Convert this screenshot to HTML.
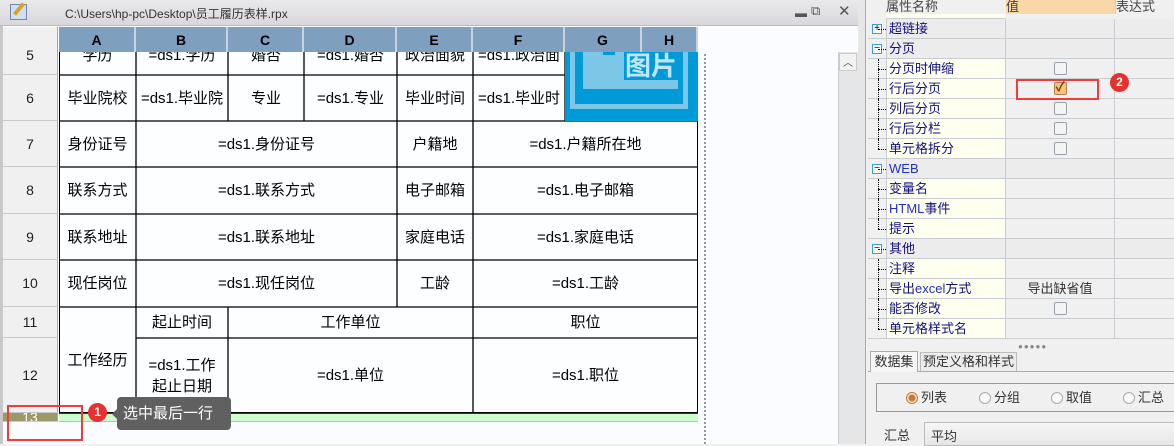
<!DOCTYPE html>
<html><head><meta charset="utf-8"><style>
*{box-sizing:border-box;margin:0;padding:0}
body{width:1174px;height:444px;overflow:hidden;background:#f0f0f0;font-family:"Liberation Sans","Noto Sans CJK SC",sans-serif;position:relative}
.a{position:absolute}
.c{position:absolute;display:flex;align-items:center;justify-content:center;font-size:15px;color:#000;text-align:center;line-height:21px}
.ch{position:absolute;top:27px;height:25px;background:#7f9fbf;border-right:2px solid #c8d2dc;display:flex;align-items:center;justify-content:center;font-weight:bold;font-size:14px}
.rh{position:absolute;left:3px;width:55px;background:#f0f0f0;border-bottom:1px solid #c8c8c8;border-right:1px solid #aaa;display:flex;align-items:center;justify-content:center;font-size:14px;color:#222}
.pr{position:absolute;left:868px;width:306px;height:20px;border-bottom:1px solid #c9ccd0;font-size:13px;color:#101080}
.pr .n{position:absolute;left:18px;width:119px;height:19px;padding-left:2px;line-height:19px;background:#fffff0;border-left:1px solid #c9ccd0}
.pr .v{position:absolute;left:137px;width:109px;height:19px;border-left:1px solid #c9ccd0;background:#f0f0f0;text-align:center;line-height:19px;color:#333}
.pr .e{position:absolute;left:246px;width:60px;height:19px;border-left:1px solid #c9ccd0;background:#f0f0f0}
.pr.g .n,.pr.g .v,.pr.g .e{background:#ececec}
.cb{display:inline-block;width:13px;height:13px;border:1px solid #9aa0a8;border-radius:2px;background:#f4f4f4;vertical-align:middle;margin-top:-2px}
.pm{position:absolute;left:4px;top:5px;width:10px;height:10px;border:1px solid #3aa0c8;background:#fff;font-size:10px;line-height:8px;text-align:center;color:#000}
.dl{position:absolute;left:10px;top:0;height:20px;border-left:1px dotted #000}
.dh{position:absolute;left:10px;top:10px;width:8px;border-top:1px dotted #000}
.rd{display:inline-block;width:12px;height:12px;border:1px solid #aaa;border-radius:50%;background:#fafafa;vertical-align:middle;margin-right:3px;margin-top:-2px}
</style></head><body>
<div class="a" style="left:0;top:0;width:858px;height:26px;background:linear-gradient(#e9e9ec,#d8d8dc);border-bottom:1px solid #bbb"></div>
<div class="a" style="left:10px;top:4px;width:17px;height:16px;background:#cfe0f0;border:1px solid #6a8ab0"></div>
<div class="a" style="left:17px;top:2px;width:4px;height:14px;background:#e0a020;transform:rotate(40deg)"></div>
<div class="a" style="left:65px;top:5px;font-size:12px;color:#333">C:\Users\hp-pc\Desktop\员工履历表样.rpx</div>
<div class="a" style="left:795px;top:6px;font-size:12px;color:#555">▬</div>
<div class="a" style="left:811px;top:3px;font-size:13px;color:#555">⧉</div>
<div class="a" style="left:838px;top:2px;font-size:15px;color:#555">✕</div>
<div class="a" style="left:0;top:26px;width:858px;height:418px;background:#fafcff;border-left:3px solid #c8c8c8"></div>
<div class="a" style="left:3px;top:27px;width:55px;height:25px;background:#f0f0f0;border-right:1px solid #aaa"></div>
<div class="ch" style="left:59px;width:77px">A</div>
<div class="ch" style="left:136px;width:92px">B</div>
<div class="ch" style="left:228px;width:76px">C</div>
<div class="ch" style="left:304px;width:93px">D</div>
<div class="ch" style="left:397px;width:76px">E</div>
<div class="ch" style="left:473px;width:92px">F</div>
<div class="ch" style="left:565px;width:77px">G</div>
<div class="ch" style="left:642px;width:56px">H</div>
<div class="rh" style="top:52px;height:23px;align-items:flex-start;line-height:6px">5</div>
<div class="rh" style="top:75px;height:46px">6</div>
<div class="rh" style="top:121px;height:46px">7</div>
<div class="rh" style="top:167px;height:47px">8</div>
<div class="rh" style="top:214px;height:46px">9</div>
<div class="rh" style="top:260px;height:47px">10</div>
<div class="rh" style="top:307px;height:31px">11</div>
<div class="rh" style="top:338px;height:75px">12</div>
<div class="rh" style="top:413px;height:9px;background:#9a9a66;color:#fff;overflow:hidden;line-height:6px">13</div>
<div class="a" style="left:59px;top:52px;width:639px;height:361px;background:#fcfeff;border:1px solid #000;border-top:none"></div>
<svg class="a" style="left:0;top:0" width="860" height="444">
<g stroke="#000" stroke-width="1.3" fill="none">
<line x1="59" y1="75" x2="565" y2="75"/><line x1="59" y1="121" x2="698" y2="121"/>
<line x1="59" y1="167" x2="698" y2="167"/><line x1="59" y1="214" x2="698" y2="214"/>
<line x1="59" y1="260" x2="698" y2="260"/><line x1="59" y1="307" x2="698" y2="307"/>
<line x1="136" y1="338" x2="698" y2="338"/>
<line x1="136" y1="52" x2="136" y2="413"/><line x1="228" y1="52" x2="228" y2="121"/>
<line x1="304" y1="52" x2="304" y2="121"/><line x1="397" y1="52" x2="397" y2="307"/>
<line x1="473" y1="52" x2="473" y2="413"/><line x1="565" y1="52" x2="565" y2="121"/>
<line x1="228" y1="307" x2="228" y2="413"/>
</g>
<line x1="705" y1="54" x2="705" y2="444" stroke="#333" stroke-dasharray="2,2"/>
</svg>
<svg class="a" style="left:565px;top:52px" width="133" height="69">
<rect x="0" y="0" width="133" height="69" fill="#009ad9"/>
<rect x="5" y="0" width="118" height="57" fill="#7cc6e8"/>
<rect x="10" y="0" width="108" height="52" fill="#009ad9"/>
<rect x="18" y="0" width="95" height="37" fill="#7cc6e8"/>
<rect x="59" y="0" width="54" height="28" fill="#009ad9"/>
<text x="60" y="23" font-size="26" font-weight="bold" fill="#bfe6f7" font-family="Noto Sans CJK SC">图片</text>
<rect x="38" y="0" width="12" height="3" fill="#009ad9"/>
</svg>
<div class="c" style="left:59px;top:52px;width:77px;height:23px;align-items:flex-start;line-height:8px;overflow:hidden">学历</div>
<div class="c" style="left:136px;top:52px;width:92px;height:23px;align-items:flex-start;line-height:8px;overflow:hidden">=ds1.学历</div>
<div class="c" style="left:228px;top:52px;width:76px;height:23px;align-items:flex-start;line-height:8px;overflow:hidden">婚否</div>
<div class="c" style="left:304px;top:52px;width:93px;height:23px;align-items:flex-start;line-height:8px;overflow:hidden">=ds1.婚否</div>
<div class="c" style="left:397px;top:52px;width:76px;height:23px;align-items:flex-start;line-height:8px;overflow:hidden">政治面貌</div>
<div class="c" style="left:473px;top:52px;width:92px;height:23px;align-items:flex-start;line-height:8px;overflow:hidden;white-space:nowrap">=ds1.政治面</div>
<div class="c" style="left:59px;top:75px;width:77px;height:46px">毕业院校</div>
<div class="c" style="left:136px;top:75px;width:92px;height:46px;white-space:nowrap">=ds1.毕业院</div>
<div class="c" style="left:228px;top:75px;width:76px;height:46px">专业</div>
<div class="c" style="left:304px;top:75px;width:93px;height:46px">=ds1.专业</div>
<div class="c" style="left:397px;top:75px;width:76px;height:46px">毕业时间</div>
<div class="c" style="left:473px;top:75px;width:92px;height:46px;white-space:nowrap">=ds1.毕业时</div>
<div class="c" style="left:59px;top:121px;width:77px;height:46px">身份证号</div>
<div class="c" style="left:136px;top:121px;width:261px;height:46px">=ds1.身份证号</div>
<div class="c" style="left:397px;top:121px;width:76px;height:46px">户籍地</div>
<div class="c" style="left:473px;top:121px;width:225px;height:46px">=ds1.户籍所在地</div>
<div class="c" style="left:59px;top:167px;width:77px;height:47px">联系方式</div>
<div class="c" style="left:136px;top:167px;width:261px;height:47px">=ds1.联系方式</div>
<div class="c" style="left:397px;top:167px;width:76px;height:47px">电子邮箱</div>
<div class="c" style="left:473px;top:167px;width:225px;height:47px">=ds1.电子邮箱</div>
<div class="c" style="left:59px;top:214px;width:77px;height:46px">联系地址</div>
<div class="c" style="left:136px;top:214px;width:261px;height:46px">=ds1.联系地址</div>
<div class="c" style="left:397px;top:214px;width:76px;height:46px">家庭电话</div>
<div class="c" style="left:473px;top:214px;width:225px;height:46px">=ds1.家庭电话</div>
<div class="c" style="left:59px;top:260px;width:77px;height:47px">现任岗位</div>
<div class="c" style="left:136px;top:260px;width:261px;height:47px">=ds1.现任岗位</div>
<div class="c" style="left:397px;top:260px;width:76px;height:47px">工龄</div>
<div class="c" style="left:473px;top:260px;width:225px;height:47px">=ds1.工龄</div>
<div class="c" style="left:59px;top:307px;width:77px;height:106px">工作经历</div>
<div class="c" style="left:136px;top:307px;width:92px;height:31px">起止时间</div>
<div class="c" style="left:228px;top:307px;width:245px;height:31px">工作单位</div>
<div class="c" style="left:473px;top:307px;width:225px;height:31px">职位</div>
<div class="c" style="left:136px;top:338px;width:92px;height:75px">=ds1.工作<br>起止日期</div>
<div class="c" style="left:228px;top:338px;width:245px;height:75px">=ds1.单位</div>
<div class="c" style="left:473px;top:338px;width:225px;height:75px">=ds1.职位</div>
<div class="a" style="left:59px;top:413px;width:639px;height:1px;background:#800080"></div>
<div class="a" style="left:59px;top:414px;width:639px;height:8px;background:#ccffcc;border-bottom:1px solid #bbb"></div>
<div class="a" style="left:838px;top:52px;width:20px;height:392px;background:#e4e6e8;border-left:1px solid #ccc"></div>
<div class="a" style="left:839px;top:53px;width:18px;height:18px;background:#f2f2f2;border:1px solid #ccc;font-size:10px;text-align:center;color:#444">︿</div>
<div class="a" style="left:7px;top:405px;width:76px;height:36px;border:2px solid #f03c3c"></div>
<div class="a" style="left:88px;top:403px;width:19px;height:19px;border-radius:50%;background:#e83030;color:#fff;font-size:12px;font-weight:bold;text-align:center;line-height:19px">1</div>
<div class="a" style="left:117px;top:397px;width:114px;height:33px;background:#5f605f;border-radius:4px;color:#fff;font-size:15px;line-height:33px;padding-left:6px">选中最后一行</div>
<div class="a" style="left:112px;top:409px;width:0;height:0;border:5px solid transparent;border-right-color:#5f605f;border-left:none"></div>
<div class="a" style="left:858px;top:0;width:8px;height:444px;background:#e6e6e6;border-right:1px solid #aaa"></div>
<div class="a" style="left:868px;top:0;width:306px;height:340px;background:#f0f0f0"></div>
<div class="a" style="left:868px;top:0;width:137px;height:14px;font-size:13px;color:#444;line-height:13px;padding-left:18px">属性名称</div>
<div class="a" style="left:1006px;top:0;width:109px;height:14px;background:#f9d7a6;font-size:13px;color:#444;line-height:13px">值</div>
<div class="a" style="left:1115px;top:0;width:59px;height:14px;font-size:13px;color:#444;line-height:13px;border-left:1px solid #ccc">表达式</div>
<div class="a" style="left:886px;top:14px;width:119px;height:5px;background:#fffff0;border-bottom:1px solid #c9ccd0"></div>
<div class="pr g" style="top:19px"><div class="pm">+</div><div class="dh"></div><div class="n">超链接</div><div class="v"></div><div class="e"></div></div>
<div class="pr g" style="top:39px"><div class="pm">−</div><div class="dh"></div><div class="n">分页</div><div class="v"></div><div class="e"></div></div>
<div class="pr" style="top:59px"><div class="dl"></div><div class="dh"></div><div class="n">分页时伸缩</div><div class="v"><span class="cb"></span></div><div class="e"></div></div>
<div class="pr" style="top:79px"><div class="dl"></div><div class="dh"></div><div class="n">行后分页</div><div class="v"><span class="cb" style="background:#f7c27a;border-color:#b08050;position:relative"><span style="position:absolute;left:1px;top:-6px;font-size:13px;color:#704010;font-weight:bold">✓</span></span></div><div class="e"></div></div>
<div class="pr" style="top:99px"><div class="dl"></div><div class="dh"></div><div class="n">列后分页</div><div class="v"><span class="cb"></span></div><div class="e"></div></div>
<div class="pr" style="top:119px"><div class="dl"></div><div class="dh"></div><div class="n">行后分栏</div><div class="v"><span class="cb"></span></div><div class="e"></div></div>
<div class="pr" style="top:139px"><div class="dl" style="height:10px"></div><div class="dh"></div><div class="n">单元格拆分</div><div class="v"><span class="cb"></span></div><div class="e"></div></div>
<div class="pr g" style="top:159px"><div class="pm">−</div><div class="dh"></div><div class="n" style="color:#2030c0">WEB</div><div class="v"></div><div class="e"></div></div>
<div class="pr" style="top:179px"><div class="dl"></div><div class="dh"></div><div class="n">变量名</div><div class="v"></div><div class="e"></div></div>
<div class="pr" style="top:199px"><div class="dl"></div><div class="dh"></div><div class="n"><span style="color:#2030c0">HTML</span>事件</div><div class="v"></div><div class="e"></div></div>
<div class="pr" style="top:219px"><div class="dl" style="height:10px"></div><div class="dh"></div><div class="n">提示</div><div class="v"></div><div class="e"></div></div>
<div class="pr g" style="top:239px"><div class="pm">−</div><div class="dh"></div><div class="n">其他</div><div class="v"></div><div class="e"></div></div>
<div class="pr" style="top:259px"><div class="dl"></div><div class="dh"></div><div class="n">注释</div><div class="v"></div><div class="e"></div></div>
<div class="pr" style="top:279px"><div class="dl"></div><div class="dh"></div><div class="n">导出<span style="color:#2030c0">excel</span>方式</div><div class="v">导出缺省值</div><div class="e"></div></div>
<div class="pr" style="top:299px"><div class="dl"></div><div class="dh"></div><div class="n">能否修改</div><div class="v"><span class="cb"></span></div><div class="e"></div></div>
<div class="pr" style="top:319px"><div class="dl" style="height:10px"></div><div class="dh"></div><div class="n">单元格样式名</div><div class="v"></div><div class="e"></div></div>
<div class="a" style="left:1016px;top:79px;width:83px;height:21px;border:2px solid #f03c3c"></div>
<div class="a" style="left:1110px;top:73px;width:19px;height:19px;border-radius:50%;background:#e83030;color:#fff;font-size:12px;font-weight:bold;text-align:center;line-height:19px">2</div>
<div class="a" style="left:1018px;top:342px;font-size:8px;color:#888;letter-spacing:1px">●●●●●</div>
<div class="a" style="left:868px;top:371px;width:306px;height:73px;background:#f0f0f0;border-top:1px solid #aab"></div>
<div class="a" style="left:870px;top:351px;width:48px;height:21px;background:#f6f6f6;border:1px solid #aaa;border-bottom:none;font-size:13px;color:#333;text-align:center;line-height:20px">数据集</div>
<div class="a" style="left:920px;top:352px;width:97px;height:19px;background:#ececec;border:1px solid #bbb;border-bottom:none;font-size:13px;color:#333;text-align:center;line-height:18px">预定义格和样式</div>
<div class="a" style="left:876px;top:383px;width:300px;height:29px;border:1px solid #999;font-size:13px;color:#333;line-height:27px">
<span style="position:absolute;left:29px"><span class="rd" style="border-color:#c08040;background:radial-gradient(#c87a3a 3px,#f8e0c8 4px)"></span>列表</span>
<span style="position:absolute;left:102px"><span class="rd"></span>分组</span>
<span style="position:absolute;left:174px"><span class="rd"></span>取值</span>
<span style="position:absolute;left:246px"><span class="rd"></span>汇总</span>
</div>
<div class="a" style="left:884px;top:425px;font-size:13px;color:#333">汇总</div>
<div class="a" style="left:924px;top:422px;width:252px;height:24px;border:1px solid #bbb;background:linear-gradient(#f6f6f6,#e6e6e6);font-size:13px;color:#333;padding:3px 6px">平均</div>
</body></html>
